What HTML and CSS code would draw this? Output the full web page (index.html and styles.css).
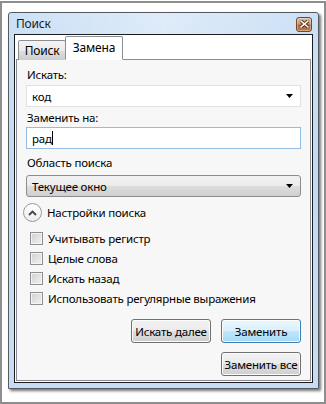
FILE: index.html
```html
<!DOCTYPE html>
<html lang="ru">
<head>
<meta charset="utf-8">
<title>Поиск</title>
<link rel="stylesheet" href="styles.css">
</head>
<body>
<div class="screen">
  <div class="win">
    <div class="titlebar">
      <span class="title">Поиск</span>
      <span class="close">
        <svg width="9" height="8" viewBox="0 0 9 8"><path d="M1 1 L8 7 M8 1 L1 7" stroke="#3a2414" stroke-width="3.2" stroke-linecap="square"/><path d="M1 1 L8 7 M8 1 L1 7" stroke="#fff" stroke-width="1.6" stroke-linecap="square"/></svg>
      </span>
    </div>
    <div class="client">
      <div class="tabs">
        <div class="tab">Поиск</div>
        <div class="tab active">Замена</div>
      </div>
      <div class="panel">
        <div class="label l1">Искать:</div>
        <div class="combo"><span>код</span><svg class="arrow" width="7" height="4" viewBox="0 0 7 4"><path d="M0 0 H7 L3.5 4 Z" fill="#000"/></svg></div>
        <div class="label l2">Заменить на:</div>
        <div class="textbox"><span>рад</span><span class="caret"></span></div>
        <div class="label l3">Область поиска</div>
        <div class="dropdown"><span>Текущее окно</span><svg class="arrow" width="7" height="4" viewBox="0 0 7 4"><path d="M0 0 H7 L3.5 4 Z" fill="#000"/></svg></div>
        <div class="expander">
          <span class="circle"><svg width="9" height="6" viewBox="0 0 9 6"><path d="M1 5 L4.5 1.5 L8 5" fill="none" stroke="#444" stroke-width="1.8"/></svg></span>
          <span>Настройки поиска</span>
        </div>
        <div class="checks">
          <div class="check"><span class="box"></span><span>Учитывать регистр</span></div>
          <div class="check"><span class="box"></span><span>Целые слова</span></div>
          <div class="check"><span class="box"></span><span>Искать назад</span></div>
          <div class="check"><span class="box"></span><span>Использовать регулярные выражения</span></div>
        </div>
        <div class="buttons">
          <div class="row">
            <div class="btn">Искать далее</div>
            <div class="btn default">Заменить</div>
          </div>
          <div class="row">
            <div class="btn">Заменить все</div>
          </div>
        </div>
      </div>
    </div>
  </div>
</div>
</body>
</html>
```
FILE: styles.css
```css
html, body {
  margin: 0;
  padding: 0;
  background: #fff;
}
body {
  font-family: "Noto Sans", "Open Sans", sans-serif;
  font-size: 11.5px;
  letter-spacing: -0.2px;
  color: #000;
}
.screen {
  width: 326px;
  height: 403px;
  margin-top: 1px;
  box-sizing: border-box;
  border: 2px solid #8e8e8e;
  padding: 9px 0 0 6px;
  background: #fff;
}
.win {
  width: 311px;
  height: 377px;
  box-sizing: border-box;
  border: 1px solid #555a60;
  border-radius: 3px 3px 0 0;
  background: linear-gradient(180deg, #cde1f6 0%, #c2daf3 40%, #c8ddf4 100%);
  padding: 0 5px 5px 5px;
  display: flex;
  flex-direction: column;
  box-shadow: 2px 2px 3px 0 rgba(0, 0, 0, 0.55);
}
.titlebar {
  height: 21px;
  display: flex;
  align-items: center;
  justify-content: space-between;
  background: linear-gradient(90deg, rgba(255,255,255,0) 0%, rgba(255,255,255,0.35) 50%, rgba(255,255,255,0) 100%);
}
.title {
  margin-left: 2px;
  margin-top: -1px;
  font-size: 12px;
  color: #1a1a1a;
}
.close {
  width: 16px;
  height: 15px;
  margin-right: 1px;
  margin-top: 1px;
  box-sizing: border-box;
  border: 1px solid #6a4a32;
  border-radius: 3px;
  background: linear-gradient(180deg, #e3b994 0%, #cf9064 45%, #b3612d 55%, #c07a47 100%);
  display: flex;
  align-items: center;
  justify-content: center;
  box-shadow: inset 0 0 0 1px rgba(255,255,255,0.35);
}
.client {
  flex: 1;
  border: 1px solid #1c1c1c;
  background: #fff;
  padding: 2px 1px 1px 1px;
  display: flex;
  flex-direction: column;
}
.tabs {
  display: flex;
  align-items: flex-end;
  padding-left: 2px;
  height: 23px;
  margin-bottom: -1px;
  position: relative;
  z-index: 1;
}
.tab {
  width: 48px;
  height: 20px;
  box-sizing: border-box;
  border: 1px solid #8c8e94;
  border-bottom: none;
  text-align: center;
  background: linear-gradient(180deg, #f3f3f3 0%, #ebebeb 50%, #dddddd 51%, #cfcfcf 100%);
  line-height: 19px;
  border-radius: 2px 2px 0 0;
  font-size: 12px;
}
.tab.active {
  width: 58px;
  margin-left: -1px;
  background: #fff;
  line-height: 21px;
  border-bottom: 1px solid #fff;
  height: 24px;
}
.panel {
  flex: 1;
  border: 1px solid #898c95;
  background: #f7f7f7;
  padding: 0 9px;
  display: flex;
  flex-direction: column;
}
.label {
  line-height: 16px;
  padding-left: 1px;
}
.l1 { margin-top: 7px; margin-bottom: 2px; }
.l2 { margin-top: 3px; margin-bottom: 1px; }
.l3 { margin-top: 6px; margin-bottom: 4px; }
.combo, .textbox, .dropdown {
  height: 22px;
  box-sizing: border-box;
  display: flex;
  align-items: center;
  justify-content: space-between;
  padding: 0 5px 0 5px;
}
.combo {
  background: #fff;
  border: 1px solid #e1e1e1;
}
.textbox {
  background: #fff;
  border: 1px solid #93bde2;
  justify-content: flex-start;
}
.caret {
  display: inline-block;
  width: 1px;
  height: 14px;
  background: #000;
  margin-left: 0;
}
.dropdown {
  border: 1px solid #8d8d8d;
  border-radius: 3px;
  background: linear-gradient(180deg, #f2f2f2 0%, #ebebeb 50%, #dddddd 51%, #cfcfcf 100%);
}
.arrow {
  margin-right: 2px;
}
.expander {
  margin-top: 6px;
  display: flex;
  align-items: center;
  gap: 5px;
  margin-left: -3px;
  height: 19px;
}
.circle {
  width: 19px;
  height: 19px;
  box-sizing: border-box;
  border: 1px solid #9a9a9a;
  border-radius: 50%;
  background: linear-gradient(180deg, #ffffff, #ededed);
  display: flex;
  align-items: center;
  justify-content: center;
}
.checks {
  margin-top: 6px;
  display: flex;
  flex-direction: column;
}
.check {
  height: 20px;
  display: flex;
  align-items: center;
  gap: 5px;
  padding-left: 4px;
}
.box {
  width: 13px;
  height: 13px;
  box-sizing: border-box;
  border: 1px solid #8e8f8f;
  background: linear-gradient(135deg, #cfcfcf 0%, #f2f2f2 100%);
  box-shadow: inset 0 0 0 1px #f4f4f4;
}
.buttons {
  margin-top: 11px;
  display: flex;
  flex-direction: column;
  gap: 9px;
}
.row {
  display: flex;
  justify-content: flex-end;
  gap: 10px;
}
.btn {
  width: 80px;
  height: 24px;
  box-sizing: border-box;
  border: 1px solid #707070;
  border-radius: 3px;
  background: linear-gradient(180deg, #f2f2f2 0%, #ebebeb 50%, #dddddd 51%, #cfcfcf 100%);
  box-shadow: inset 0 0 0 1px #fcfcfc;
  display: flex;
  align-items: center;
  justify-content: center;
  white-space: nowrap;
}
.btn.default {
  border-color: #3c7fb1;
  background: linear-gradient(180deg, #eaf6fd 0%, #d9f0fc 50%, #bee6fd 51%, #a7d9f5 100%);
}
```
